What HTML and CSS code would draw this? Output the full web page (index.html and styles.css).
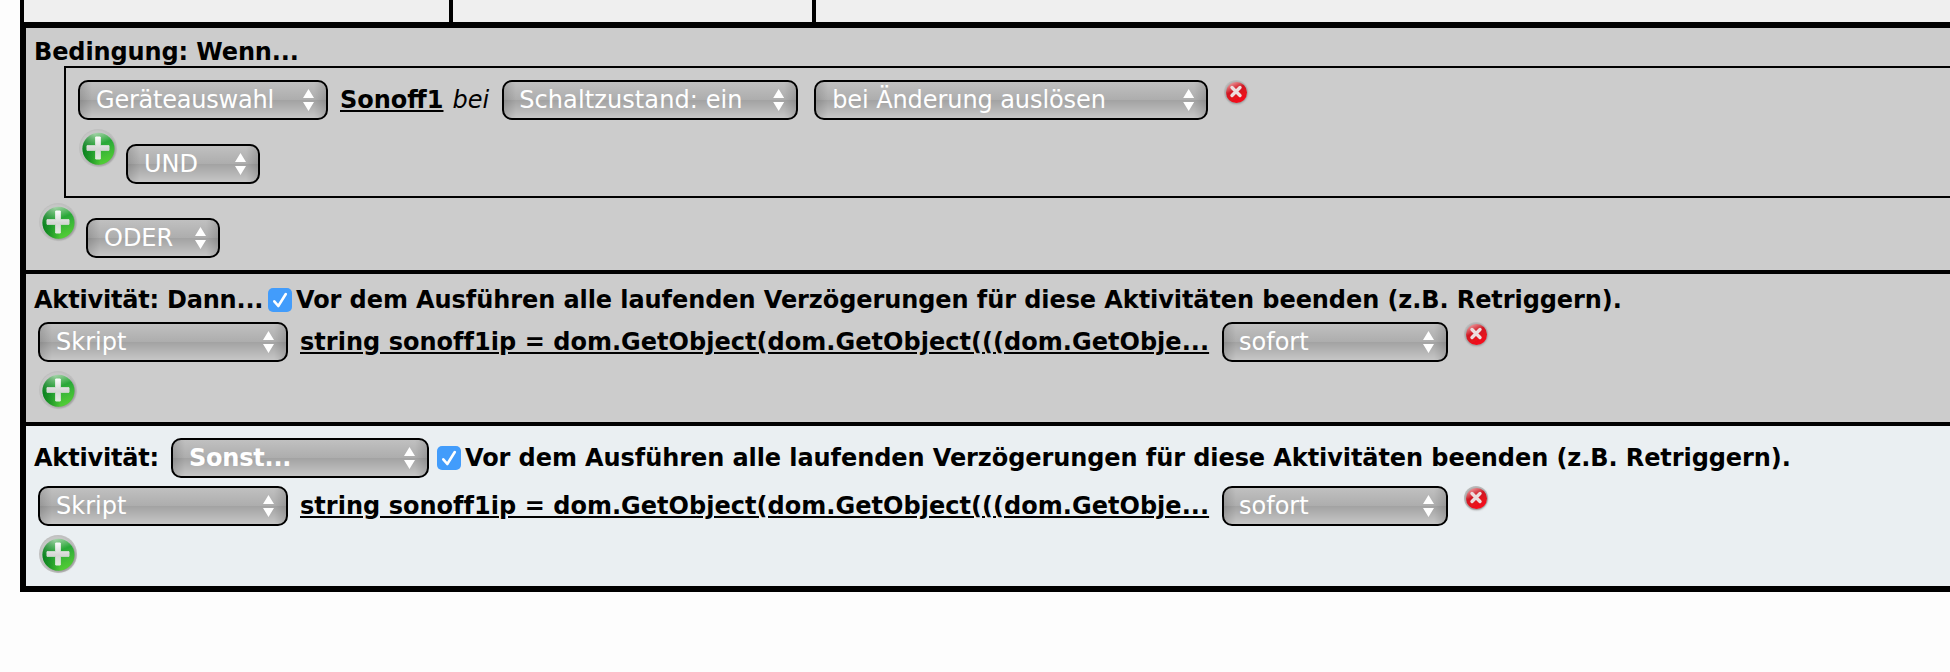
FILE: index.html
```html
<!DOCTYPE html>
<html lang="de">
<head>
<meta charset="utf-8">
<title>Programm</title>
<link rel="stylesheet" href="styles.css">
</head>
<body>
<svg class="defs" width="0" height="0" aria-hidden="true">
  <defs>
    <linearGradient id="green" x1="0.3" y1="0" x2="0.7" y2="1"><stop offset="0" stop-color="#b2d8b6"/><stop offset="0.4" stop-color="#2aa838"/><stop offset="1" stop-color="#55d035"/></linearGradient>
    <linearGradient id="greenSide" x1="0" y1="0.7" x2="1" y2="0.5"><stop offset="0" stop-color="#067a1c" stop-opacity="0.9"/><stop offset="0.5" stop-color="#067a1c" stop-opacity="0"/></linearGradient>
    <linearGradient id="plusFill" gradientUnits="userSpaceOnUse" x1="0" y1="8" x2="0" y2="32"><stop offset="0" stop-color="#ffffff"/><stop offset="0.55" stop-color="#d4d6d4"/><stop offset="1" stop-color="#e4ece2"/></linearGradient>
    <linearGradient id="red" x1="0.2" y1="0" x2="0.7" y2="1"><stop offset="0" stop-color="#eda6a9"/><stop offset="0.4" stop-color="#d01822"/><stop offset="1" stop-color="#fb0d1a"/></linearGradient>
    <filter id="soft" x="-20%" y="-20%" width="140%" height="140%"><feGaussianBlur stdDeviation="0.7"/></filter>
    <filter id="shade" x="-30%" y="-30%" width="160%" height="160%"><feGaussianBlur stdDeviation="1.3"/></filter>
    <symbol id="plus" viewBox="0 0 40 40">
      <circle cx="20" cy="20" r="19" fill="#c0c0c0" filter="url(#soft)"/>
      <circle cx="21.500" cy="21.500" r="16" fill="#929292" filter="url(#shade)"/>
      <circle cx="19" cy="19" r="16.500" fill="#c6c6c6" filter="url(#soft)"/>
      <g filter="url(#soft)">
        <circle cx="20.500" cy="20.800" r="16" fill="url(#green)"/>
        <circle cx="20.500" cy="20.800" r="16" fill="url(#greenSide)"/>
        <path d="M17.700 9h4.600v8.700h8.700v4.600h-8.700v8.700h-4.600v-8.700h-8.700v-4.600h8.700z" fill="url(#plusFill)" stroke="url(#plusFill)" stroke-width="1" stroke-linejoin="round"/>
      </g>
    </symbol>
    <symbol id="cross" viewBox="0 0 28 28">
      <circle cx="14" cy="14" r="12" fill="#bebebe" filter="url(#soft)"/>
      <circle cx="14.500" cy="15" r="11" fill="#989898" filter="url(#shade)"/>
      <g filter="url(#soft)">
        <circle cx="14.500" cy="14.500" r="10.500" fill="url(#red)"/>
        <path d="M10 9.500l8 8M18 9.500l-8 8" stroke="#ecdede" stroke-width="3.400" stroke-linecap="round"/>
      </g>
    </symbol>
    <symbol id="check" viewBox="0 0 24 24">
      <rect width="24" height="24" rx="5" fill="#429cfb"/>
      <path d="M6.300 13.300l4 4.700L17.800 6" fill="none" stroke="#fff" stroke-width="2.600" stroke-linecap="round" stroke-linejoin="round"/>
    </symbol>
  </defs>
</svg>
<main class="program">
  <div class="head-row"><div class="head-cell first"></div><div class="head-cell second"></div><div class="head-cell last"></div></div>
  <section class="rule condition">
    <h2 class="title">Bedingung: Wenn...</h2>
    <div class="group">
      <div class="row">
        <button class="select w-device">Geräteauswahl</button>
        <a class="link">Sonoff1</a>
        <em class="em">bei</em>
        <button class="select w-state">Schaltzustand: ein</button>
        <button class="select w-trigger">bei Änderung auslösen</button>
        <svg class="cross"><use href="#cross"/></svg>
      </div>
      <div class="row add"><svg class="plus"><use href="#plus"/></svg><button class="select w-op">UND</button></div>
    </div>
    <div class="row add outer"><svg class="plus"><use href="#plus"/></svg><button class="select w-op">ODER</button></div>
  </section>
  <section class="rule then">
    <div class="title"><span class="t-dann">Aktivität: Dann...</span><svg class="check"><use href="#check"/></svg><span class="note">Vor dem Ausführen alle laufenden Verzögerungen für diese Aktivitäten beenden (z.B. Retriggern).</span></div>
    <div class="row">
      <button class="select w-script">Skript</button>
      <a class="link script">string sonoff1ip = dom.GetObject(dom.GetObject(((dom.GetObje...</a>
      <button class="select w-time">sofort</button>
      <svg class="cross"><use href="#cross"/></svg>
    </div>
    <svg class="plus"><use href="#plus"/></svg>
  </section>
  <section class="rule else">
    <div class="title"><span class="t-akt">Aktivität:</span><button class="select w-else">Sonst...</button><svg class="check"><use href="#check"/></svg><span class="note">Vor dem Ausführen alle laufenden Verzögerungen für diese Aktivitäten beenden (z.B. Retriggern).</span></div>
    <div class="row">
      <button class="select w-script">Skript</button>
      <a class="link script">string sonoff1ip = dom.GetObject(dom.GetObject(((dom.GetObje...</a>
      <button class="select w-time">sofort</button>
      <svg class="cross"><use href="#cross"/></svg>
    </div>
    <svg class="plus"><use href="#plus"/></svg>
  </section>
</main>
</body>
</html>
```
FILE: styles.css
```css
* { box-sizing: border-box; }
body { margin: 0; background: #fdfdfd; color: #000; font: 24px/30px Verdana, "DejaVu Sans", sans-serif; overflow: hidden; }
.defs { position: absolute; }
.program { width: 1960px; margin-left: 20px; white-space: nowrap; }

.head-row { display: flex; height: 22px; border-left: 4px solid #000; background: #efefef; }
.head-cell { border-right: 4px solid #000; }
.first { width: 429px; }
.second { width: 363px; }
.last { flex: 1; }

.rule { border-left: 6px solid #000; background: #ccc; }
.condition { height: 252px; border-top: 6px solid #000; border-bottom: 4px solid #000; }
.then { height: 152px; border-bottom: 4px solid #000; }
.else { height: 166px; border-bottom: 6px solid #000; background: #eaeff2; }

.title { display: flex; align-items: center; margin: 0; padding-left: 8px; font-size: 24px; font-weight: bold; letter-spacing: -0.12px; }
.condition .title { height: 38px; padding-top: 10px; }
.then .title { height: 48px; padding-top: 4px; }
.else .title { height: 60px; padding-top: 4px; }
.t-dann { width: 234px; letter-spacing: -0.2px; }
.t-akt { width: 137px; letter-spacing: -0.2px; }
.note { letter-spacing: -0.08px; }
.check { width: 24px; height: 24px; margin-right: 4px; flex: none; }

.group { height: 132px; margin-left: 38px; padding: 12px; border: 2px solid #000; border-right: 0; }
.row { display: flex; height: 40px; align-items: center; }
.group .row + .row { margin-top: 8px; }
.row.add { height: 56px; align-items: flex-start; gap: 8px; }
.row.add .select { margin-top: 16px; }
.outer { margin: 4px 0 0 12px; }
.then > .row, .else > .row { margin-left: 12px; }

.plus { display: block; width: 40px; height: 40px; flex: none; }
.then > .plus, .else > .plus { margin: 8px 0 0 12px; }
.cross { width: 28px; height: 28px; flex: none; align-self: flex-start; margin: -2px 0 0 14px; }

.select {
  position: relative; flex: none; height: 40px; padding: 0 0 0 16px; border: 2px solid #000; border-radius: 10px;
  color: #fff; font: inherit; text-align: left;
  background:
    linear-gradient(90deg, rgba(0,0,0,.13), transparent 12px calc(100% - 12px), rgba(0,0,0,.13)),
    linear-gradient(#c0c0c0, #adadad 50%, #a2a2a2 50%, #c6c6c6);
}
.select::after {
  content: ""; position: absolute; right: 12px; top: 7px; width: 11px; height: 22px; background: #fff;
  clip-path: polygon(50% 0, 100% 41%, 0 41%, 0 59%, 100% 59%, 50% 100%, 0 59%, 0 41%);
}
.w-device { width: 250px; letter-spacing: -0.22px; }
.w-script { width: 250px; }
.w-state { width: 296px; margin-right: 16px; padding-left: 15px; letter-spacing: 0.1px; }
.w-trigger { width: 394px; letter-spacing: -0.08px; }
.w-op { width: 134px; }
.w-time { width: 226px; padding-left: 15px; }
.w-else { width: 258px; margin-right: 8px; letter-spacing: -0.22px; }

.link { font-weight: bold; text-decoration: underline; margin-left: 12px; }
.script { width: 908px; margin-right: 14px; letter-spacing: 0.03px; }
.em { margin: 0 13px 0 9px; }
```
